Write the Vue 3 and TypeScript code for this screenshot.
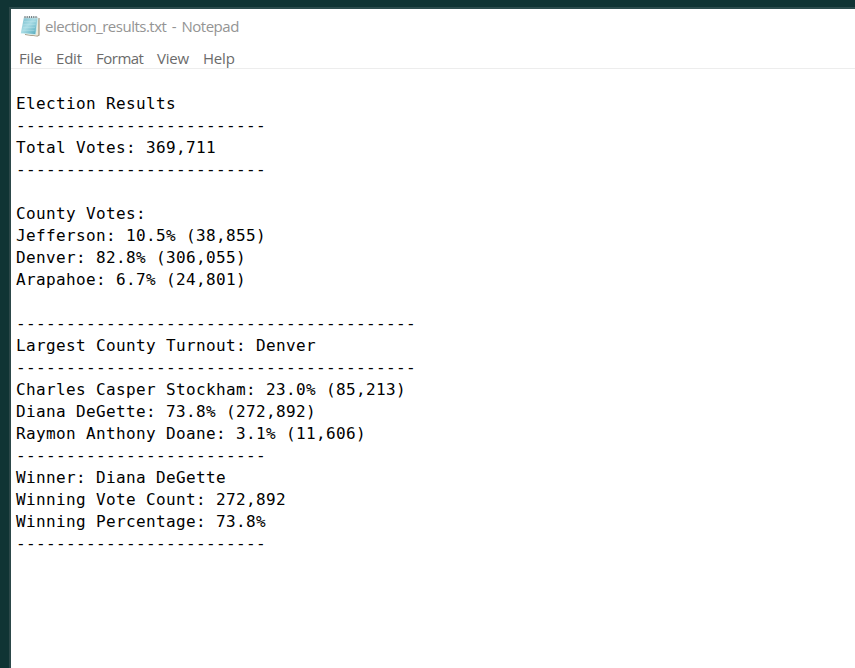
<script setup lang="ts">
interface MenuEntry {
  label: string
  key: string
}

const menu: MenuEntry[] = [
  { label: 'File', key: 'file' },
  { label: 'Edit', key: 'edit' },
  { label: 'Format', key: 'format' },
  { label: 'View', key: 'view' },
  { label: 'Help', key: 'help' },
]

const shortRule = '-'.repeat(25)
const longRule = '-'.repeat(40)

const lines: string[] = [
  'Election Results',
  shortRule,
  'Total Votes: 369,711',
  shortRule,
  '',
  'County Votes:',
  'Jefferson: 10.5% (38,855)',
  'Denver: 82.8% (306,055)',
  'Arapahoe: 6.7% (24,801)',
  '',
  longRule,
  'Largest County Turnout: Denver',
  longRule,
  'Charles Casper Stockham: 23.0% (85,213)',
  'Diana DeGette: 73.8% (272,892)',
  'Raymon Anthony Doane: 3.1% (11,606)',
  shortRule,
  'Winner: Diana DeGette',
  'Winning Vote Count: 272,892',
  'Winning Percentage: 73.8%',
  shortRule,
]
</script>

<template>
  <div class="desktop">
    <main class="window">
      <header class="titlebar">
        <svg class="icon" viewBox="0 0 21 22" aria-hidden="true">
          <defs>
            <linearGradient id="cover" x1="0" y1="0" x2="1" y2="1">
              <stop offset="0" stop-color="#72b9c9" />
              <stop offset=".45" stop-color="#a9dce5" />
              <stop offset="1" stop-color="#4ba5b8" />
            </linearGradient>
          </defs>
          <path d="M5 3H19.5V20.5L17.5 21.5L5 20Z" fill="#8d826b" />
          <path d="M5 3H18.5V20.5L16 20.8L4 19Z" fill="#eee9d8" />
          <path d="M4 2H18L15.7 19.6L0.8 18.3Z" fill="url(#cover)" />
          <path d="M.8 18.3L15.7 19.6L18 2" fill="none" stroke="#d8f2f5" stroke-width=".7" />
          <path d="M4 6.5H16M3.5 9.5H15.5M3 12.5H15M2.5 15.5H14.5" stroke="#c5e9ee" stroke-width=".5" opacity=".7" />
          <path d="M4 2.5H18" stroke="#d8dedf" stroke-width="1.5" />
          <path d="M5 3V1M7.2 3V1M9.4 3V1M11.6 3V1M13.8 3V1M16 3V1" stroke="#66777b" stroke-width="1" />
        </svg>
        <span class="title">election_results.txt - Notepad</span>
      </header>
      <nav class="menu">
        <span v-for="entry in menu" :key="entry.key" :class="['entry', entry.key]">{{ entry.label }}</span>
      </nav>
      <section class="document">
        <div v-for="(line, index) in lines" :key="index" class="line">{{ line }}</div>
      </section>
    </main>
  </div>
</template>

<style>
body {
  margin: 0;
  overflow: hidden;
}
</style>

<style scoped>
.desktop {
  box-sizing: border-box;
  width: 855px;
  height: 668px;
  padding: 7px 0 0 9px;
  background: #103434;
  overflow: hidden;
}

.window {
  box-sizing: border-box;
  height: 661px;
  border-top: 2px solid #2c4c4d;
  border-left: 2px solid #2c4849;
  background: #fff;
}

.titlebar {
  display: flex;
  align-items: center;
  height: 36px;
  padding-left: 9px;
}

.icon {
  width: 21px;
  height: 22px;
  margin-top: -2px;
}

.title {
  margin: -2px 0 0 4px;
  color: #949494;
  font: 400 15px/36px 'Open Sans', 'Noto Sans', sans-serif;
  letter-spacing: -0.5px;
  word-spacing: 2px;
  white-space: pre;
}

.menu {
  box-sizing: border-box;
  display: flex;
  height: 24px;
  padding-left: 8px;
  border-bottom: 1px solid #ededed;
  color: #6b6b6b;
  font: 400 15px/28px 'Open Sans', 'Noto Sans', sans-serif;
  letter-spacing: -0.2px;
}

.entry {
  flex: none;
  height: 22px;
  line-height: 27px;
}

.file { width: 37px; }
.edit { width: 40px; }
.format { width: 61px; letter-spacing: -0.5px; }
.view { width: 46px; }

.document {
  padding: 24px 0 0 5px;
  color: #000;
  font: 16px/22px 'DejaVu Sans Mono', monospace;
  letter-spacing: 0.368px;
}

.line {
  height: 22px;
  white-space: pre;
}
</style>
